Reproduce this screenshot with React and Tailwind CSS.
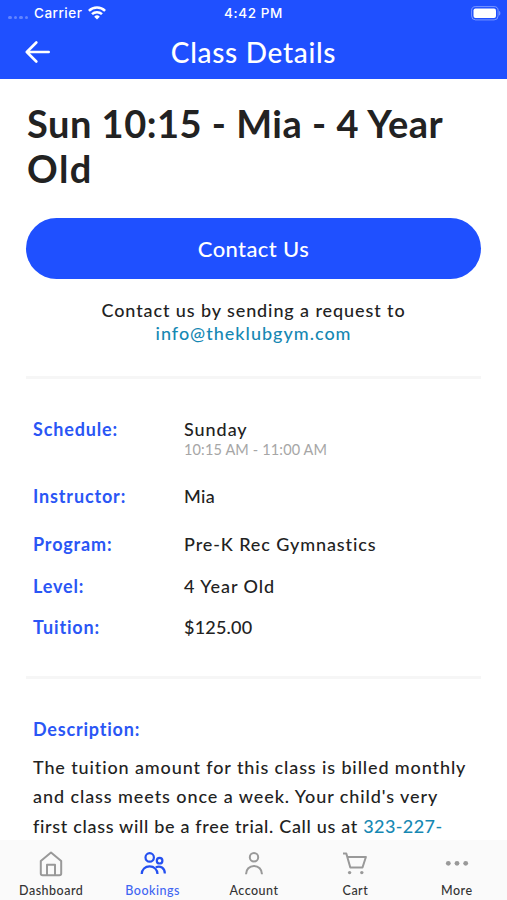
import { clsx } from 'clsx';

const details = [
  { label: 'Schedule:', value: 'Sunday', note: '10:15 AM - 11:00 AM', gap: 'h-[67px]', tracking: 'tracking-[0.95px]' },
  { label: 'Instructor:', value: 'Mia', gap: 'h-12', tracking: 'tracking-[0.3px]' },
  { label: 'Program:', value: 'Pre-K Rec Gymnastics', gap: 'h-[41.5px]', tracking: 'tracking-[0.9px]' },
  { label: 'Level:', value: '4 Year Old', gap: 'h-[41.5px]', tracking: 'tracking-[0.95px]' },
  { label: 'Tuition:', value: '$125.00', gap: 'h-6', tracking: 'tracking-[0.2px]' },
];

const HomeIcon = () => (
  <svg width="26" height="28" viewBox="0 0 26 28" fill="none" stroke="currentColor" strokeWidth="2" strokeLinejoin="round">
    <path d="M2.8 11 13 2.500l10.200 8.500v12.500a1.800 1.800 0 0 1-1.800 1.800H4.600a1.800 1.800 0 0 1-1.800-1.800z" />
    <path d="M9 25.300V14.700h8v10.600" />
  </svg>
);

const BookingsIcon = () => (
  <svg width="26" height="28" viewBox="0 0 26 28" fill="none" stroke="currentColor" strokeWidth="2.200">
    <circle cx="9.700" cy="7.400" r="4.200" />
    <circle cx="19.600" cy="10.700" r="2.800" />
    <path d="M1.700 24c0-4.600 3.500-7.700 7.900-7.700s7.900 3.100 7.900 7.700" />
    <path d="M15.800 17.300c4.300-2.100 9.200.6 9 6.200" />
  </svg>
);

const AccountIcon = () => (
  <svg width="26" height="28" viewBox="0 0 26 28" fill="none" stroke="currentColor" strokeWidth="2">
    <circle cx="13" cy="7.200" r="4.200" />
    <path d="M5 24.300c0-4.900 3.500-8.300 8-8.300s8 3.400 8 8.300" />
  </svg>
);

const CartIcon = () => (
  <svg width="26" height="28" viewBox="0 0 26 28" fill="none" stroke="currentColor" strokeWidth="2" strokeLinejoin="round">
    <path d="M1 3.500h3.300l4 14h12.200L23.900 7H5.400" />
    <circle cx="7.600" cy="22.600" r="1.700" fill="currentColor" stroke="none" />
    <circle cx="19.800" cy="22.600" r="1.700" fill="currentColor" stroke="none" />
  </svg>
);

const MoreIcon = () => (
  <svg width="26" height="28" viewBox="0 0 26 28" fill="currentColor">
    <circle cx="4.300" cy="13.300" r="2.400" />
    <circle cx="13" cy="13.300" r="2.400" />
    <circle cx="21.700" cy="13.300" r="2.400" />
  </svg>
);

const tabs = [
  { name: 'Dashboard', icon: HomeIcon },
  { name: 'Bookings', icon: BookingsIcon, active: true },
  { name: 'Account', icon: AccountIcon },
  { name: 'Cart', icon: CartIcon },
  { name: 'More', icon: MoreIcon },
];

const StatusBar = () => (
  <div className="grid h-[26px] grid-cols-3 items-center font-[Inter,sans-serif] text-[13.5px] font-medium">
    <div className="flex items-center pl-2">
      <span className="mt-[9px] flex gap-[2px]">
        {[0, 1, 2, 3].map((dot) => (
          <span key={dot} className="size-[3.5px] rounded-full bg-white/30" />
        ))}
      </span>
      <span className="ml-[6px] tracking-[0.5px]">Carrier</span>
      <svg className="ml-[6px]" width="18" height="14" viewBox="0 0 18 14" fill="none" stroke="currentColor" strokeWidth="2.500">
        <path d="M.9 4.900a11.500 11.500 0 0 1 16.200 0" />
        <path d="M4 8.200a7.200 7.200 0 0 1 10 0" />
        <path d="M9 13.600 6.200 10.700a4 4 0 0 1 5.600 0z" fill="currentColor" stroke="none" />
      </svg>
    </div>
    <div className="text-center tracking-[0.6px]">4:42 PM</div>
    <div className="flex justify-end pr-[6px]">
      <svg width="30" height="15" viewBox="0 0 30 15">
        <rect x=".6" y=".6" width="26.500" height="13.300" rx="4" fill="none" stroke="#fff" strokeOpacity=".4" />
        <rect x="2.500" y="2.500" width="22.500" height="9.500" rx="2" fill="#fff" />
        <path d="M28.200 5v4.500c1.500-.6 1.500-3.900 0-4.500" fill="#fff" fillOpacity=".45" />
      </svg>
    </div>
  </div>
);

const App = () => {
  return (
    <div className="flex h-[900px] w-[507px] flex-col overflow-hidden bg-white font-[Lato,sans-serif] text-[#222222]">
      <header className="h-[79px] shrink-0 bg-[#1f50ff] text-white">
        <StatusBar />
        <div className="grid h-[52px] grid-cols-[60px_1fr_60px] items-center">
          <svg className="ml-[25px]" width="26" height="24" viewBox="0 0 26 24" fill="none" stroke="currentColor" strokeWidth="2.600" strokeLinecap="round" strokeLinejoin="round">
            <path d="M11.300 2.500 1.800 12l9.500 9.500M2 12h21.700" />
          </svg>
          <h1 className="text-center text-[28px] font-medium tracking-[0.7px]">Class Details</h1>
        </div>
      </header>

      <main className="min-h-0 flex-1 overflow-hidden px-[26px] pt-[22px]">
        <h2 className="pl-px text-[38px] leading-[45px] font-bold tracking-[0.5px] whitespace-nowrap">
          Sun 10:15 - Mia - 4 Year
          <br />
          <span className="tracking-[1.5px]">Old</span>
        </h2>
        <button className="mt-[27px] flex h-[61px] w-full items-center justify-center rounded-full bg-[#1f50ff] text-[22px] font-medium tracking-[0.4px] text-white">
          Contact Us
        </button>
        <p className="mt-[20px] text-center text-[18px] leading-[23px] font-medium tracking-[0.9px]">
          Contact us by sending a request to
          <br />
          <a className="tracking-[1px] text-[#1688b3]">info@theklubgym.com</a>
        </p>

        <section className="mt-[31px] border-t-3 border-[#f6f6f6] px-[7px] pt-[38px]">
          {details.map((row) => (
            <div key={row.label} className={clsx('grid grid-cols-[151px_1fr] text-[18px] leading-6 font-medium whitespace-nowrap', row.gap)}>
              <span className="font-bold tracking-[0.85px] text-[#2a56f5]">{row.label}</span>
              <div>
                <div className={row.tracking}>{row.value}</div>
                {row.note && <div className="text-[14.5px] leading-[18px] font-normal tracking-[0.15px] text-[#a6a6a6]">{row.note}</div>}
              </div>
            </div>
          ))}
        </section>

        <section className="mt-[37px] border-t-3 border-[#f6f6f6] px-[7px] pt-[38px]">
          <h3 className="text-[18px] leading-6 font-bold tracking-[0.8px] text-[#2a56f5]">Description:</h3>
          <p className="mt-[12px] text-[18px] leading-[29.3px] font-medium tracking-[0.88px] whitespace-nowrap">
            The tuition amount for this class is billed monthly
            <br />
            <span className="tracking-[0.92px]">and class meets once a week. Your child's very</span>
            <br />
            <span className="tracking-[0.68px]">
              first class will be a free trial. Call us at <a className="tracking-[0.4px] text-[#1688b3]">323-227-</a>
            </span>
          </p>
        </section>
      </main>

      <nav className="grid h-[60px] shrink-0 grid-cols-5 bg-[#fafafa]">
        {tabs.map(({ name, icon: Icon, active }) => (
          <div key={name} className="flex flex-col items-center pt-[10px] pl-px">
            <span className={clsx('block h-7', active ? 'text-[#2450f0]' : 'text-[#999999]')}>
              <Icon />
            </span>
            <span className={clsx('mt-[5px] text-[12.5px] leading-4 font-medium tracking-[0.5px]', active ? 'text-[#3f65f2]' : 'text-[#333333]')}>{name}</span>
          </div>
        ))}
      </nav>
    </div>
  );
};

export default App;
